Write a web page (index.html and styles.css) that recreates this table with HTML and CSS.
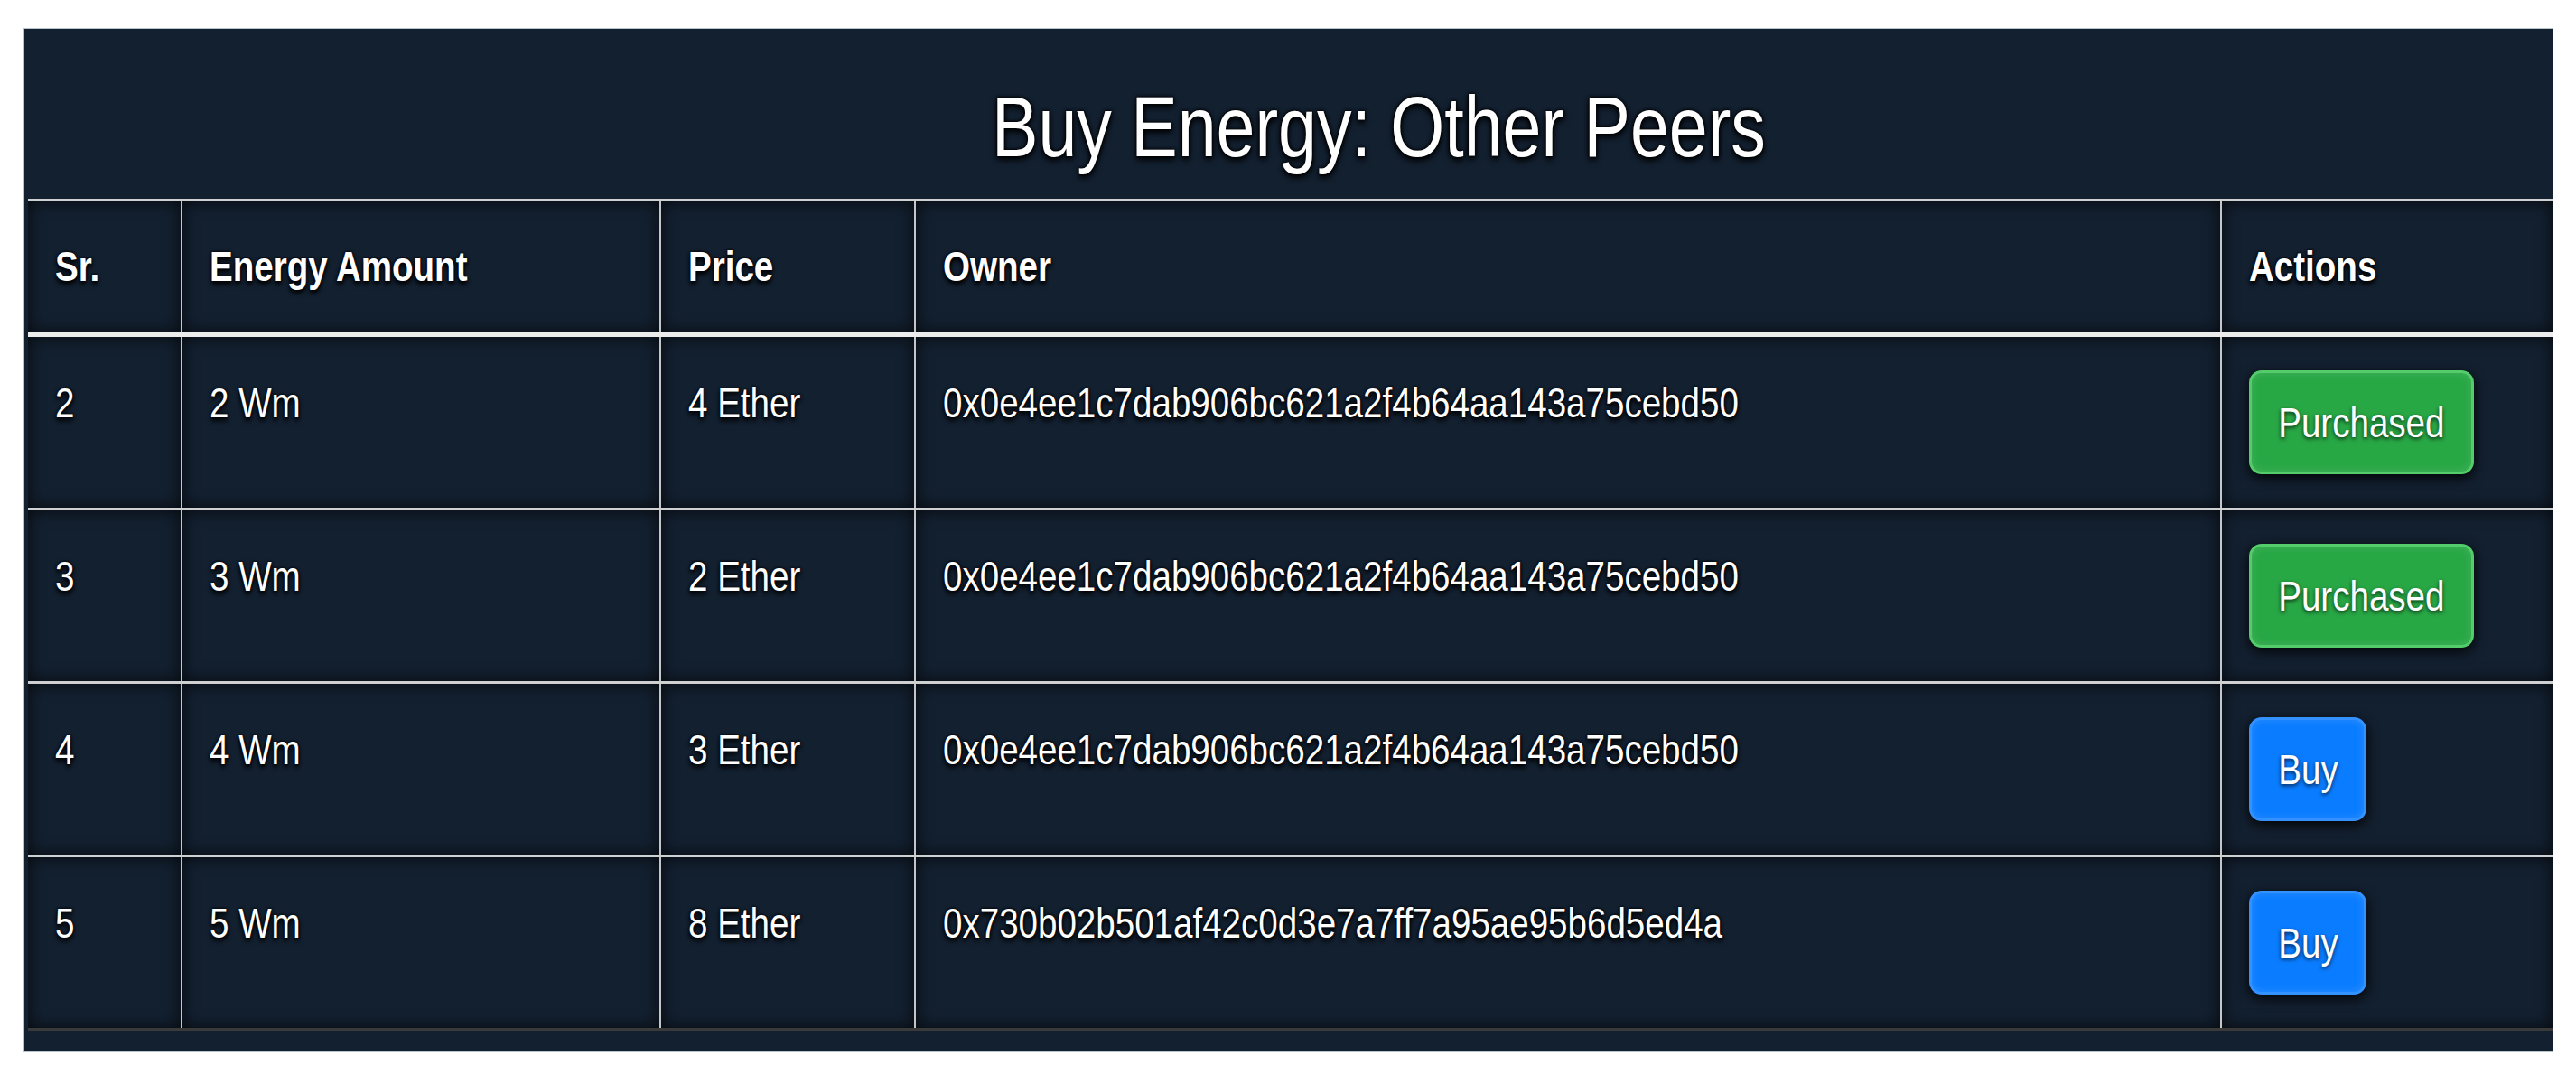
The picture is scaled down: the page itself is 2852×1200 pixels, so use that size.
FILE: index.html
```html
<!DOCTYPE html>
<html lang="en">
<head>
<meta charset="utf-8">
<title>Buy Energy: Other Peers</title>
<link rel="stylesheet" href="styles.css">
</head>
<body>
<div class="panel">
  <h2 class="title"><span class="t">Buy Energy: Other Peers</span></h2>
  <table class="grid">
    <colgroup>
      <col class="c-sr">
      <col class="c-amt">
      <col class="c-price">
      <col class="c-owner">
      <col class="c-act">
    </colgroup>
    <thead>
      <tr>
        <th><span class="t">Sr.</span></th>
        <th><span class="t">Energy Amount</span></th>
        <th><span class="t">Price</span></th>
        <th><span class="t">Owner</span></th>
        <th><span class="t">Actions</span></th>
      </tr>
    </thead>
    <tbody>
      <tr>
        <td><span class="t">2</span></td>
        <td><span class="t">2 Wm</span></td>
        <td><span class="t">4 Ether</span></td>
        <td><span class="t">0x0e4ee1c7dab906bc621a2f4b64aa143a75cebd50</span></td>
        <td><button class="btn btn-green"><span class="t">Purchased</span></button></td>
      </tr>
      <tr>
        <td><span class="t">3</span></td>
        <td><span class="t">3 Wm</span></td>
        <td><span class="t">2 Ether</span></td>
        <td><span class="t">0x0e4ee1c7dab906bc621a2f4b64aa143a75cebd50</span></td>
        <td><button class="btn btn-green"><span class="t">Purchased</span></button></td>
      </tr>
      <tr>
        <td><span class="t">4</span></td>
        <td><span class="t">4 Wm</span></td>
        <td><span class="t">3 Ether</span></td>
        <td><span class="t">0x0e4ee1c7dab906bc621a2f4b64aa143a75cebd50</span></td>
        <td><button class="btn btn-blue"><span class="t">Buy</span></button></td>
      </tr>
      <tr class="last">
        <td><span class="t">5</span></td>
        <td><span class="t">5 Wm</span></td>
        <td><span class="t">8 Ether</span></td>
        <td><span class="t">0x730b02b501af42c0d3e7a7ff7a95ae95b6d5ed4a</span></td>
        <td><button class="btn btn-blue"><span class="t">Buy</span></button></td>
      </tr>
    </tbody>
  </table>
</div>
</body>
</html>
```

FILE: styles.css
```css
html, body {
  margin: 0;
  padding: 0;
  background: #ffffff;
}

body {
  font-family: "Liberation Sans", Arial, sans-serif;
  color: #ffffff;
}

/* the screenshot is horizontally condensed: narrow the glyphs */
.t {
  display: inline-block;
  white-space: nowrap;
  transform: scaleX(0.82);
  transform-origin: left center;
}

.panel {
  margin: 31px 25px 0 26px;
  background: #132030;
  border: 1px solid #b9c1c9;
  padding: 0 0 23px 0;
  overflow: hidden;
}

.title {
  margin: 0;
  padding: 53px 0 23px 200px;
  text-align: center;
  font-size: 94px;
  line-height: 112px;
  font-weight: 400;
  color: #ffffff;
  text-shadow: 0 4px 8px #000, 0 0 5px #000, 0 0 3px #000;
}

.title .t {
  transform-origin: center center;
}

.grid {
  margin-left: 4px;
  width: calc(100% - 4px);
  border-collapse: collapse;
  table-layout: fixed;
}

.c-sr { width: 170px; }
.c-amt { width: 530px; }
.c-price { width: 282px; }
.c-owner { width: 1446px; }

.grid th,
.grid td {
  text-align: left;
  vertical-align: top;
  padding: 37px 30px;
  font-size: 47px;
  line-height: 72px;
  border-top: 3px solid #cfd0d2;
  border-left: 2px solid #c4c6c9;
  box-shadow: inset 0 0 18px rgba(0, 0, 0, 0.75);
  text-shadow: 0 4px 6px #000, 0 0 4px #000, 0 0 2px #000;
  overflow: visible;
}

.grid th:first-child,
.grid td:first-child {
  border-left: none;
}

.grid th {
  font-weight: 700;
  padding: 36px 30px 37px;
  border-bottom: 5px solid #ececec;
}

.grid tr.last td {
  border-bottom: 3px solid #3b3a3a;
}

.btn {
  display: inline-block;
  height: 115px;
  padding: 0;
  margin: 0;
  border-radius: 14px;
  border: 3px solid transparent;
  font-family: inherit;
  font-size: 47px;
  line-height: 107px;
  text-align: center;
  color: #ffffff;
  text-shadow: 0 2px 5px rgba(0, 0, 0, 0.7);
  box-shadow: 0 4px 14px rgba(0, 0, 0, 0.95), inset 0 0 10px rgba(255, 255, 255, 0.14);
  cursor: pointer;
  vertical-align: top;
}

.btn .t {
  transform-origin: center center;
}

.btn-green {
  width: 249px;
  background: #28a745;
  border-color: #55cc6b;
}

.btn-blue {
  width: 130px;
  background: #0a7cff;
  border-color: #3392ff;
}
```
